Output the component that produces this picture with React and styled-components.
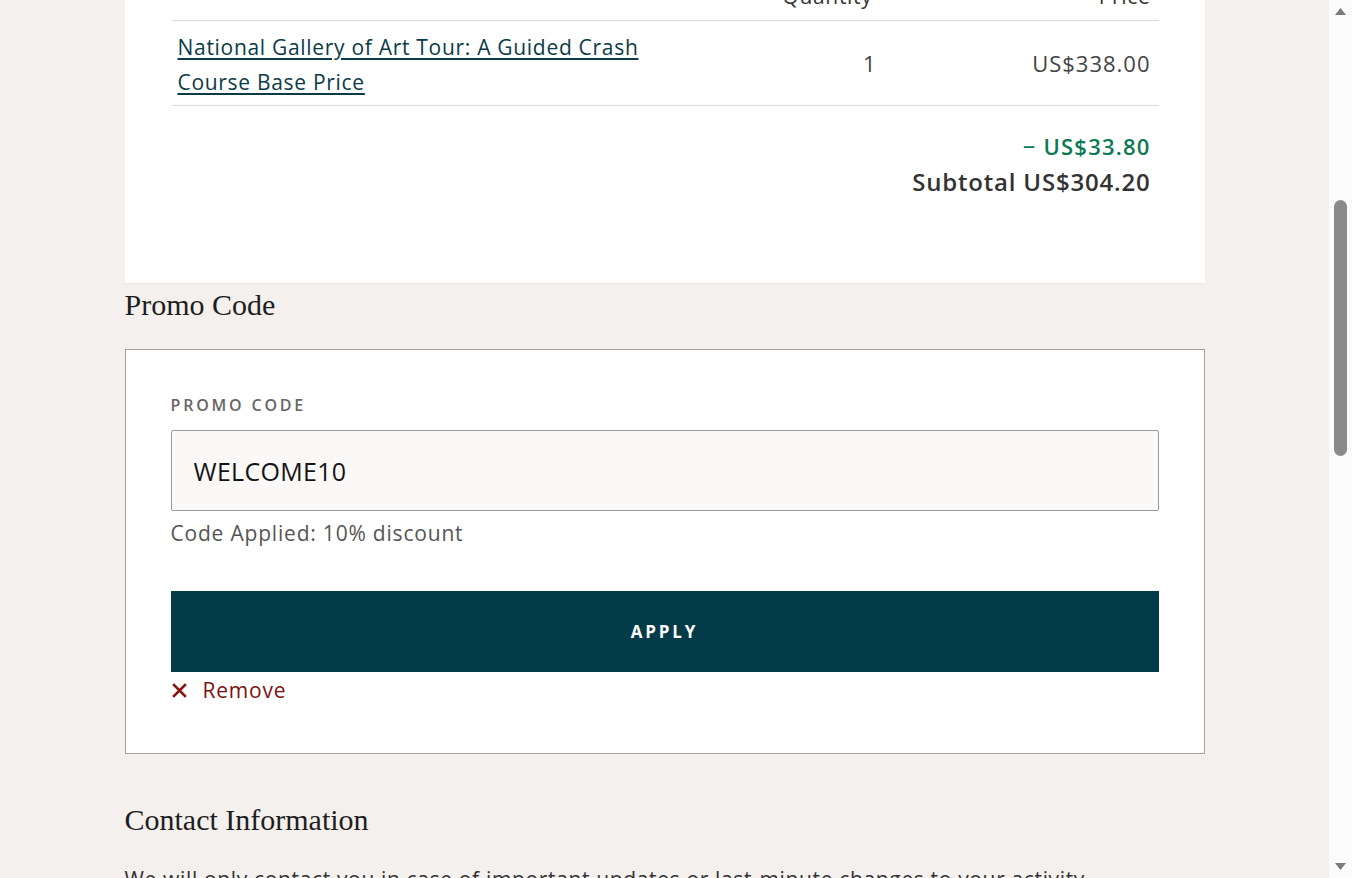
import React from "react";
import styled, { createGlobalStyle } from "styled-components";

const GlobalStyle = createGlobalStyle`
  html, body {
    margin: 0;
    padding: 0;
    height: 100%;
    overflow: hidden;
  }
  body {
    font-family: "Open Sans", "Liberation Sans", sans-serif;
    background: #f3f0ed;
  }
`;

const Screen = styled.div`
  display: flex;
  height: 100vh;
  width: 100vw;
  overflow: hidden;
`;

const Main = styled.div`
  flex: 1;
  overflow: hidden;
  background: #f3f0ed;
`;

const Column = styled.div`
  width: 1080px;
  margin: -23px auto 0;
`;

const Card = styled.div`
  background: #fff;
  padding: 0 46px 83px 47px;
  border-bottom: 1px solid #ebe7e3;
`;

const Table = styled.div`
  display: grid;
  grid-template-columns: 1fr 236px 278px;
`;

const HeadCell = styled.div`
  height: 44px;
  box-sizing: border-box;
  display: flex;
  align-items: flex-end;
  justify-content: flex-end;
  padding: 0 8px 12px;
  font-size: 21px;
  line-height: 24px;
  letter-spacing: 0.7px;
  color: #333;
  border-bottom: 1px solid #dcdcdc;
`;

const Cell = styled.div`
  display: flex;
  align-items: center;
  justify-content: ${(p) => (p.$pad ? "flex-end" : "flex-start")};
  padding: ${(p) => (p.$pad ? `0 ${p.$pad}px` : "9px 6px 5px")};
  border-bottom: 1px solid #dcdcdc;
  font-size: 22px;
  letter-spacing: 1px;
  color: #444;
`;

const ItemLink = styled.a`
  color: #0b3b46;
  font-size: 21px;
  line-height: 35px;
  letter-spacing: 0.7px;
  text-decoration: underline;
  text-underline-offset: 3px;
  max-width: 500px;
`;

const Totals = styled.div`
  display: flex;
  flex-direction: column;
  align-items: flex-end;
  padding: 22px 8px 0 0;
`;

const TotalLine = styled.div`
  font-size: ${(p) => p.$size}px;
  letter-spacing: ${(p) => p.$spacing}px;
  line-height: 36px;
  font-weight: 600;
  color: ${(p) => p.$color};
`;

const SectionTitle = styled.h2`
  font-family: "Liberation Serif", "Times New Roman", serif;
  font-weight: 400;
  font-size: 30px;
  line-height: 34px;
  color: #1e1e1e;
  margin: ${(p) => p.$margin};
`;

const PromoBox = styled.div`
  background: #fff;
  border: 1px solid #a3a3a3;
  padding: 45px 45px 49px;
  display: flex;
  flex-direction: column;
`;

const Label = styled.label`
  font-size: 16px;
  line-height: 20px;
  font-weight: 600;
  letter-spacing: 2.8px;
  text-transform: uppercase;
  color: #666;
  margin-bottom: 15px;
`;

const Input = styled.input`
  box-sizing: border-box;
  height: 81px;
  width: 100%;
  background: #faf9f8;
  border: 1px solid #9a9a9a;
  border-radius: 2px;
  padding: 0 22px;
  font-family: inherit;
  font-size: 25px;
  letter-spacing: 0.3px;
  color: #151515;
  outline: none;
`;

const Hint = styled.div`
  margin-top: 8px;
  font-size: 21px;
  line-height: 28px;
  letter-spacing: 0.8px;
  color: #555;
`;

const ApplyButton = styled.button`
  margin-top: 44px;
  height: 81px;
  width: 100%;
  border: none;
  background: #033b48;
  color: #fff;
  font-family: inherit;
  font-size: 17px;
  font-weight: 700;
  letter-spacing: 2.8px;
`;

const RemoveLink = styled.a`
  margin-top: 4px;
  display: flex;
  align-items: center;
  gap: 15px;
  font-size: 21px;
  line-height: 28px;
  letter-spacing: 0.8px;
  color: #7b1113;
  text-decoration: none;
`;

const Paragraph = styled.p`
  margin: 28px 0 0;
  font-size: 21px;
  line-height: 28px;
  letter-spacing: 0.65px;
  color: #333;
`;

const Scrollbar = styled.div`
  width: 23px;
  background: #fbfbfb;
  display: flex;
  flex-direction: column;
  align-items: center;
`;

const Arrow = styled.div`
  height: 23px;
  display: flex;
  align-items: center;
  justify-content: center;
`;

const ThumbArea = styled.div`
  flex: 1;
  padding-top: 177px;
`;

const Thumb = styled.div`
  width: 13px;
  height: 256px;
  border-radius: 7px;
  background: #8a8a8a;
`;

export default function App() {
  return (
    <>
      <GlobalStyle />
      <Screen>
        <Main>
          <Column>
            <Card>
              <Table>
                <HeadCell />
                <HeadCell>Quantity</HeadCell>
                <HeadCell>Price</HeadCell>
                <Cell>
                  <ItemLink href="#">
                    National Gallery of Art Tour: A Guided Crash Course Base Price
                  </ItemLink>
                </Cell>
                <Cell $pad={4}>1</Cell>
                <Cell $pad={8}>US$338.00</Cell>
              </Table>
              <Totals>
                <TotalLine $size={22} $spacing={1.2} $color="#0b7a54">
                  − US$33.80
                </TotalLine>
                <TotalLine $size={24} $spacing={0.8} $color="#333">
                  Subtotal US$304.20
                </TotalLine>
              </Totals>
            </Card>

            <SectionTitle $margin="4px 0 27px">Promo Code</SectionTitle>
            <PromoBox>
              <Label htmlFor="promo">Promo Code</Label>
              <Input id="promo" defaultValue="WELCOME10" />
              <Hint>Code Applied: 10% discount</Hint>
              <ApplyButton>APPLY</ApplyButton>
              <RemoveLink href="#">
                <svg width="17" height="17" viewBox="0 0 16 16">
                  <path
                    d="M2 2 L14 14 M14 2 L2 14"
                    stroke="#8b1214"
                    strokeWidth="2.6"
                    fill="none"
                  />
                </svg>
                Remove
              </RemoveLink>
            </PromoBox>

            <SectionTitle $margin="49px 0 0">Contact Information</SectionTitle>
            <Paragraph>
              We will only contact you in case of important updates or last-minute
              changes to your activity.
            </Paragraph>
          </Column>
        </Main>
        <Scrollbar>
          <Arrow>
            <svg width="11" height="7" viewBox="0 0 11 7">
              <path d="M0 7 L5.5 0 L11 7 Z" fill="#7a7a7a" />
            </svg>
          </Arrow>
          <ThumbArea>
            <Thumb />
          </ThumbArea>
          <Arrow>
            <svg width="11" height="7" viewBox="0 0 11 7">
              <path d="M0 0 L5.5 7 L11 0 Z" fill="#7a7a7a" />
            </svg>
          </Arrow>
        </Scrollbar>
      </Screen>
    </>
  );
}
